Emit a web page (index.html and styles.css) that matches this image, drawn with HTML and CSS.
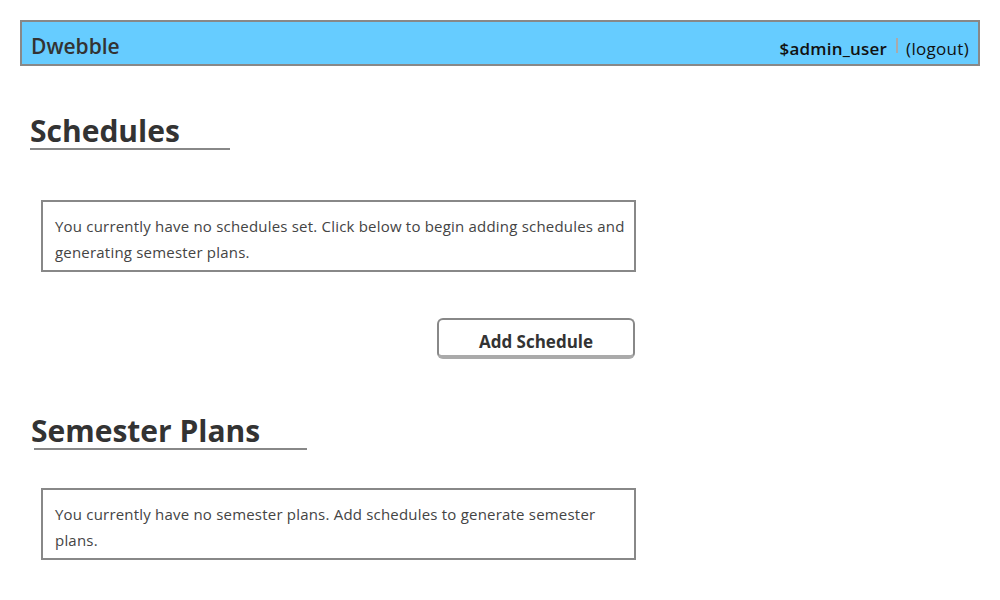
FILE: index.html
```html
<!DOCTYPE html>
<html>
<head>
<meta charset="utf-8">
<link rel="stylesheet" href="styles.css">
</head>
<body>
<header class="topbar">
  <div class="brand">Dwebble</div>
  <div class="user">
    <span class="username">$admin_user</span>
    <span class="sep"></span>
    <span class="logout">(logout)</span>
  </div>
</header>
<main class="content">
  <section class="section">
    <h2 class="heading heading-schedules">Schedules</h2>
    <div class="notice notice-schedules">You currently have no schedules set. Click below to begin adding schedules and generating semester plans.</div>
    <div class="actions">
      <button class="btn">Add Schedule</button>
    </div>
  </section>
  <section class="section">
    <h2 class="heading heading-plans">Semester Plans</h2>
    <div class="notice notice-plans">You currently have no semester plans. Add schedules to generate semester plans.</div>
  </section>
</main>
</body>
</html>
```

FILE: styles.css
```css
* { box-sizing: border-box; }
body {
  margin: 0;
  padding: 20px 20px 0 20px;
  font-family: "Open Sans", "Noto Sans", sans-serif;
  color: #333;
  background: #fff;
}
.topbar {
  height: 46px;
  background: #66ccff;
  border: 2px solid #888;
  display: flex;
  align-items: flex-end;
  justify-content: space-between;
  padding: 0 9px 5px 9px;
}
.brand {
  font-size: 21px;
  font-weight: 600;
  color: #333;
  line-height: 26px;
}
.user {
  display: flex;
  align-items: flex-start;
  font-size: 17px;
  line-height: 20px;
  color: #111;
  margin-bottom: 0;
}
.username { font-weight: 600; letter-spacing: 0.2px; }
.logout { letter-spacing: 0.3px; }
.sep {
  width: 2px;
  height: 15px;
  background: #aaa;
  margin: -1px 8px 0 9px;
}
.heading {
  margin: 0;
  font-size: 30px;
  font-weight: 700;
  color: #333;
  line-height: 35px;
}
.heading::after {
  content: "";
  display: block;
  height: 2px;
  background: #888;
}
.heading-schedules {
  margin: 47px 0 0 10px;
}
.heading-schedules::after {
  width: 200px;
}
.heading-plans {
  margin: 54px 0 0 11px;
}
.heading-plans::after {
  width: 273px;
  margin-left: 3px;
}
.notice {
  width: 595px;
  margin: 50px 0 0 21px;
  border: 2px solid #888;
  padding: 11px 8px 5px 12px;
  font-size: 15px;
  line-height: 26px;
  letter-spacing: 0.2px;
  color: #444;
}
.notice-plans {
  margin-top: 38px;
}
.actions {
  width: 595px;
  margin-left: 21px;
  display: flex;
  justify-content: flex-end;
  padding: 46px 1px 0 0;
}
.btn {
  width: 198px;
  height: 41px;
  background: #fff;
  border: 2px solid #888;
  border-bottom: 4px solid #aaa;
  border-radius: 6px;
  font-family: inherit;
  font-size: 17px;
  font-weight: 700;
  color: #333;
  padding: 8px 0 0 0;
  line-height: 24px;
}
```
